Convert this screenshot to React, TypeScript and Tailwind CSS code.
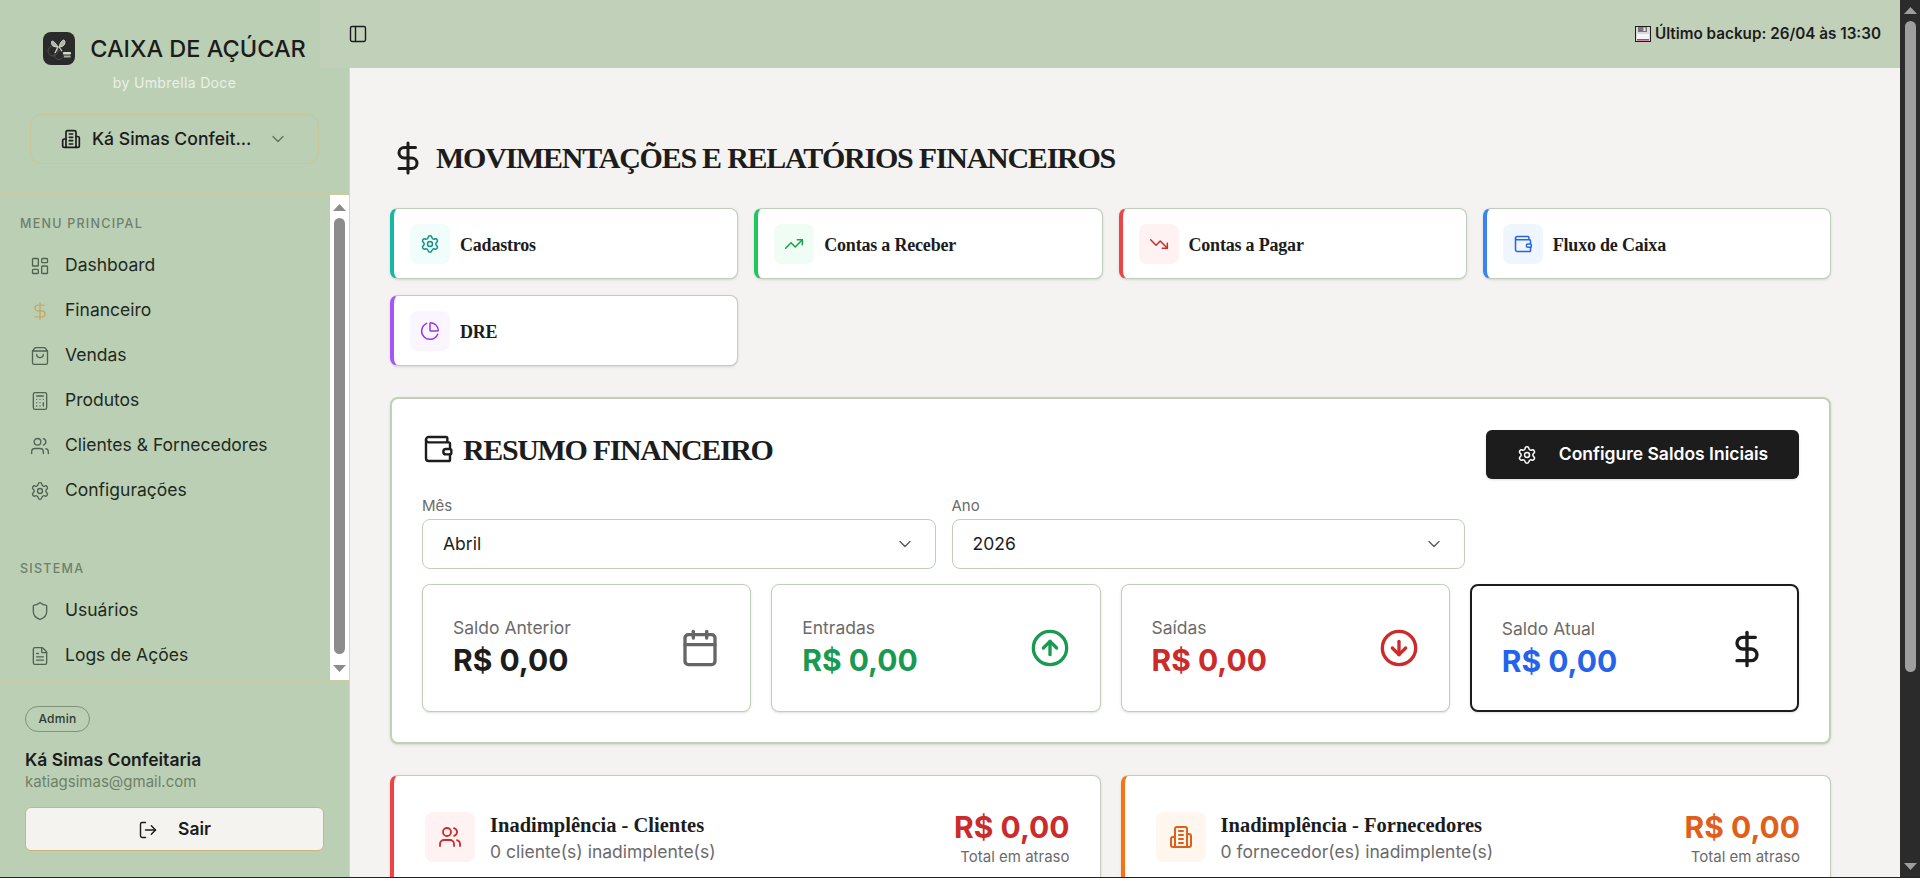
import {
    ArrowDownCircle,
    ArrowUpCircle,
    Calculator,
    Calendar,
    ChartPie,
    ChevronDown,
    DollarSign,
    FileText,
    LayoutDashboard,
    LogOut,
    PanelLeft,
    Settings,
    Shield,
    ShoppingBag,
    TrendingDown,
    TrendingUp,
    Users,
    Wallet,
} from 'lucide-react';
import type { ReactNode } from 'react';

const menuItems = [
    { label: 'Dashboard', icon: LayoutDashboard, iconClass: 'text-[#4f6450]' },
    { label: 'Financeiro', icon: DollarSign, iconClass: 'text-[#c4aa66]' },
    { label: 'Vendas', icon: ShoppingBag, iconClass: 'text-[#4f6450]' },
    { label: 'Produtos', icon: Calculator, iconClass: 'text-[#4f6450]' },
    { label: 'Clientes & Fornecedores', icon: Users, iconClass: 'text-[#4f6450]' },
    { label: 'Configurações', icon: Settings, iconClass: 'text-[#4f6450]' },
];

const systemItems = [
    { label: 'Usuários', icon: Shield, iconClass: 'text-[#4f6450]' },
    { label: 'Logs de Ações', icon: FileText, iconClass: 'text-[#4f6450]' },
];

const shortcuts = [
    { label: 'Cadastros', icon: Settings, edge: 'border-l-[#14b8a6]', box: 'bg-[#f0fdfa]', tint: 'text-[#0d9488]' },
    { label: 'Contas a Receber', icon: TrendingUp, edge: 'border-l-[#22c55e]', box: 'bg-[#f0fdf4]', tint: 'text-[#16a34a]' },
    { label: 'Contas a Pagar', icon: TrendingDown, edge: 'border-l-[#ef4444]', box: 'bg-[#fef2f2]', tint: 'text-[#cc2b2b]' },
    { label: 'Fluxo de Caixa', icon: Wallet, edge: 'border-l-[#3b82f6]', box: 'bg-[#eff6ff]', tint: 'text-[#2563eb]' },
    { label: 'DRE', icon: ChartPie, edge: 'border-l-[#a855f7]', box: 'bg-[#faf5ff]', tint: 'text-[#9333ea]' },
];

const serif = "font-['Liberation_Serif',serif]";

// the lucide version here redrew this one, so keep the older strokes
function Building({ className }: { className?: string }) {
    return (
        <svg
            viewBox="0 0 24 24"
            fill="none"
            stroke="currentColor"
            strokeWidth="2"
            strokeLinecap="round"
            strokeLinejoin="round"
            className={className}
        >
            <path d="M6 22V4a2 2 0 0 1 2-2h8a2 2 0 0 1 2 2v18Z" />
            <path d="M6 12H4a2 2 0 0 0-2 2v6a2 2 0 0 0 2 2h2" />
            <path d="M18 9h2a2 2 0 0 1 2 2v9a2 2 0 0 1-2 2h-2" />
            <path d="M10 6h4" />
            <path d="M10 10h4" />
            <path d="M10 14h4" />
            <path d="M10 18h4" />
        </svg>
    );
}

function Logo() {
    return (
        <div className="flex h-[33px] w-[32px] shrink-0 items-center justify-center rounded-lg bg-[#2a2a2a]">
            <svg viewBox="0 0 32 32" className="h-[32px] w-[32px]" fill="none">
                <circle cx="10" cy="18" r="5" stroke="#4d4d4d" strokeWidth="1" />
                <circle cx="16" cy="22" r="4.5" stroke="#4d4d4d" strokeWidth="1" />
                <path d="M15 14 C13 11 11 8 9 8 C8 10 8 14 15 14 Z" fill="#aeb3a5" stroke="#d8dccf" strokeWidth="1" />
                <path d="M16 14 C17 10 19 7 21 7 C23 9 22 14 16 14 Z" fill="#aeb3a5" stroke="#d8dccf" strokeWidth="1" />
                <path d="M15 14 L12 20 M16 14 L19 18" stroke="#d8dccf" strokeWidth="1.2" />
                <rect x="20" y="19" width="8" height="2.5" rx="1" fill="#d8dccf" />
                <rect x="21" y="22.5" width="6.5" height="2" fill="#a9ae9f" />
            </svg>
        </div>
    );
}

function Floppy() {
    return (
        <svg viewBox="0 0 16 16" className="h-[16px] w-[16px] shrink-0">
            <rect x="0.5" y="0.5" width="15" height="15" fill="#d9d9dc" stroke="#1c1c1c" />
            <rect x="3" y="1" width="9" height="5" fill="#77777c" />
            <rect x="8.5" y="1.5" width="2" height="3.5" fill="#e8e8ea" />
            <rect x="2" y="8" width="12" height="5" fill="#f6f6f6" />
            <rect x="2" y="13" width="12" height="1.5" fill="#d6336c" />
        </svg>
    );
}

function Arrow({ up, className }: { up?: boolean; className?: string }) {
    return (
        <svg viewBox="0 0 13 7" className={`h-[7px] w-[13px] ${className ?? ''}`}>
            <polygon points={up ? '6.5,0 13,7 0,7' : '0,0 13,0 6.5,7'} fill="currentColor" />
        </svg>
    );
}

function NavRow({ label, icon: Icon, iconClass }: (typeof menuItems)[number]) {
    return (
        <div className="flex h-[45px] items-center gap-[15px] px-[10px] text-[17.5px] text-[#1f2a20]">
            <Icon size={20} strokeWidth={1.6} className={iconClass} />
            <span>{label}</span>
        </div>
    );
}

function SectionLabel({ children }: { children: ReactNode }) {
    return (
        <div className="mb-[11px] h-4 text-[12.5px] leading-4 font-medium tracking-widest text-[#6e8069] uppercase">
            {children}
        </div>
    );
}

function Sidebar() {
    return (
        <aside className="flex w-[350px] shrink-0 flex-col border-r border-[#d9d6b8] bg-[#bbcfb5]">
            <div className="h-[195px] border-b border-[#cfcba0] px-[30px] pt-[32px]">
                <div className="flex items-center justify-center gap-[15px]">
                    <Logo />
                    <span className="text-[23.5px] leading-8 font-medium whitespace-nowrap text-[#1c1c1c]">
                        CAIXA DE AÇÚCAR
                    </span>
                </div>
                <p className="mt-[8px] text-center text-[14px] leading-5 tracking-wide text-[#edf0e6]">
                    by Umbrella Doce
                </p>
                <div className="mt-[21px] flex h-[50px] items-center justify-center gap-[11px] rounded-xl border border-[#c9c794] text-[#1c1c1c]">
                    <Building className="h-[20px] w-[20px]" />
                    <span className="w-[162px] text-[17.6px] font-medium whitespace-nowrap">Ká Simas Confeit...</span>
                    <ChevronDown size={20} strokeWidth={1.5} className="ml-[3px] text-[#5f6f5c]" />
                </div>
            </div>

            <div className="flex h-[485px] overflow-hidden">
                <nav className="flex-1 px-5 pt-[21px]">
                    <SectionLabel>Menu Principal</SectionLabel>
                    {menuItems.map((item) => (
                        <NavRow key={item.label} {...item} />
                    ))}
                    <div className="h-[48px]" />
                    <SectionLabel>Sistema</SectionLabel>
                    {systemItems.map((item) => (
                        <NavRow key={item.label} {...item} />
                    ))}
                </nav>
                <div className="flex w-[19px] flex-col items-center bg-white pt-[9px] pb-[8px] text-[#8c8c8c]">
                    <Arrow up />
                    <div className="mt-[7px] w-[11px] flex-1 rounded-full bg-[#8c8c8c]" />
                    <Arrow className="mt-[11px]" />
                </div>
            </div>

            <div className="flex-1 border-t border-[#cfcba0] px-[25px] pt-[25px]">
                <span className="block h-[26px] w-[65px] rounded-full border border-[#7f917a] text-center text-[12px] leading-[24px] font-medium tracking-wide text-[#2c3a2d]">
                    Admin
                </span>
                <p className="mt-4 text-[17.5px] leading-6 font-semibold text-[#1c1c1c]">Ká Simas Confeitaria</p>
                <p className="text-[15px] leading-5 text-[#6f8069]">katiagsimas@gmail.com</p>
                <button className="mt-[15px] flex h-[44px] w-[299px] items-center justify-center gap-[20px] rounded-md border border-[#c9b57a] bg-[#f5f3f0] pt-[1px] text-[17.5px] font-semibold text-[#1c1c1c]">
                    <LogOut size={20} strokeWidth={1.7} />
                    Sair
                </button>
            </div>
        </aside>
    );
}

function Shortcut({ label, icon: Icon, edge, box, tint }: (typeof shortcuts)[number]) {
    return (
        <div className={`flex h-[71px] items-center gap-[10px] rounded-lg border border-l-4 border-[#bfcfb9] bg-white pl-4 shadow-sm ${edge}`}>
            <div className={`flex h-10 w-10 items-center justify-center rounded-lg ${box}`}>
                <Icon size={20} strokeWidth={1.8} className={tint} />
            </div>
            <span className={`${serif} mt-[3px] text-[18px] font-bold tracking-[-0.2px] text-[#1c1c1c]`}>{label}</span>
        </div>
    );
}

function SelectField({ label, value }: { label: string; value: string }) {
    return (
        <div>
            <div className="mb-[3px] text-[15px] leading-5 text-[#6b6b6b]">{label}</div>
            <div className="flex h-[50px] items-center justify-between rounded-lg border border-[#bfcfb9] bg-white pr-[20px] pl-[20px] text-[17.5px] text-[#1c1c1c]">
                {value}
                <ChevronDown size={20} strokeWidth={1.5} className="text-[#555]" />
            </div>
        </div>
    );
}

function StatCard({
    label,
    valueClass,
    icon,
    strong,
}: {
    label: string;
    valueClass: string;
    icon: ReactNode;
    strong?: boolean;
}) {
    return (
        <div
            className={`flex h-[128px] items-center justify-between rounded-lg bg-white pr-[30px] pl-[30px] shadow-sm ${
                strong ? 'border-2 border-[#1c1c1c] pt-[2px]' : 'border border-[#bfcfb9]'
            }`}
        >
            <div>
                <div className="text-[17.5px] leading-6 text-[#6b6b6b]">{label}</div>
                <div className={`text-[30px] leading-10 font-bold ${valueClass}`}>R$ 0,00</div>
            </div>
            {icon}
        </div>
    );
}

function DebtCard({
    title,
    subtitle,
    icon,
    edge,
    box,
    valueClass,
}: {
    title: string;
    subtitle: string;
    icon: ReactNode;
    edge: string;
    box: string;
    valueClass: string;
}) {
    return (
        <div className={`flex items-center justify-between rounded-lg border border-l-4 border-[#bfcfb9] bg-white py-[31px] pr-[30px] pl-[31px] shadow-sm ${edge}`}>
            <div className="flex items-center gap-[15px]">
                <div className={`flex h-[50px] w-[50px] items-center justify-center rounded-lg ${box}`}>{icon}</div>
                <div>
                    <div className={`${serif} text-[20.5px] leading-7 font-bold text-[#1c1c1c]`}>{title}</div>
                    <div className="mt-[1px] text-[17.5px] leading-6 text-[#6b6b6b]">{subtitle}</div>
                </div>
            </div>
            <div className="text-right">
                <div className={`text-[30px] leading-10 font-bold ${valueClass}`}>R$ 0,00</div>
                <div className="text-[15px] leading-5 text-[#6b6b6b]">Total em atraso</div>
            </div>
        </div>
    );
}

export default function App() {
    return (
        <div className="flex h-[878px] overflow-hidden border-b border-[#222] font-['Inter',sans-serif]">
            <Sidebar />

            <div className="flex min-w-0 flex-1 flex-col">
                <header className="relative z-10 -ml-[30px] flex h-[68px] shrink-0 items-center justify-between bg-[#c1d0b9] pr-[19px] pl-[28px]">
                    <PanelLeft size={20} strokeWidth={1.7} className="text-[#1c1c1c]" />
                    <div className="flex items-center gap-[4px] text-[15.25px] font-semibold text-[#1c1c1c]">
                        <Floppy />
                        Último backup: 26/04 às 13:30
                    </div>
                </header>

                <main className="flex-1 overflow-hidden bg-[#f4f3f1] pt-[72px] pl-10">
                    <div className="w-[1441px]">
                        <h1 className="flex items-center gap-[10px] text-[#1c1c1c]">
                            <DollarSign size={36} strokeWidth={2} />
                            <span className={`${serif} text-[30px] leading-9 font-bold tracking-[-1.25px] whitespace-nowrap`}>
                                MOVIMENTAÇÕES E RELATÓRIOS FINANCEIROS
                            </span>
                        </h1>

                        <div className="mt-8 grid grid-cols-4 gap-x-4 gap-y-4">
                            {shortcuts.map((item) => (
                                <Shortcut key={item.label} {...item} />
                            ))}
                        </div>

                        <section className="mt-[31px] rounded-lg border-2 border-[#c0d0b9] bg-white p-[30px] shadow-sm">
                            <div className="flex h-[50px] items-end justify-between">
                                <h2 className="mb-[10px] flex h-[40px] items-center gap-[9px] text-[#1c1c1c]">
                                    <Wallet size={32} strokeWidth={1.8} />
                                    <span className={`${serif} text-[30px] font-bold tracking-[-1.35px]`}>RESUMO FINANCEIRO</span>
                                </h2>
                                <button className="flex h-[49px] w-[313px] items-center justify-center gap-[22px] rounded-md bg-[#1c1c1c] text-[17.5px] font-semibold text-white shadow-sm">
                                    <Settings size={20} strokeWidth={1.8} />
                                    Configure Saldos Iniciais
                                </button>
                            </div>

                            <div className="mt-[17px] grid w-[1043px] grid-cols-2 gap-4">
                                <SelectField label="Mês" value="Abril" />
                                <SelectField label="Ano" value="2026" />
                            </div>

                            <div className="mt-[15px] grid grid-cols-4 gap-5">
                                <StatCard
                                    label="Saldo Anterior"
                                    valueClass="text-[#1c1c1c]"
                                    icon={<Calendar size={40} strokeWidth={2} className="text-[#666]" />}
                                />
                                <StatCard
                                    label="Entradas"
                                    valueClass="text-[#1a9a50]"
                                    icon={<ArrowUpCircle size={40} strokeWidth={2} className="text-[#1a9a50]" />}
                                />
                                <StatCard
                                    label="Saídas"
                                    valueClass="text-[#cc2b2b]"
                                    icon={<ArrowDownCircle size={40} strokeWidth={2} className="text-[#cc2b2b]" />}
                                />
                                <StatCard
                                    strong
                                    label="Saldo Atual"
                                    valueClass="text-[#2563eb]"
                                    icon={<DollarSign size={40} strokeWidth={2} className="text-[#1c1c1c]" />}
                                />
                            </div>
                        </section>

                        <div className="mt-[31px] grid grid-cols-2 gap-5">
                            <DebtCard
                                title="Inadimplência - Clientes"
                                subtitle="0 cliente(s) inadimplente(s)"
                                edge="border-l-[#ef4444]"
                                box="bg-[#fef2f2]"
                                valueClass="text-[#cc2b2b]"
                                icon={<Users size={24} strokeWidth={1.8} className="text-[#cc2b2b]" />}
                            />
                            <DebtCard
                                title="Inadimplência - Fornecedores"
                                subtitle="0 fornecedor(es) inadimplente(s)"
                                edge="border-l-[#f97316]"
                                box="bg-[#fff7ed]"
                                valueClass="text-[#e0601a]"
                                icon={<Building className="h-6 w-6 text-[#e0601a]" />}
                            />
                        </div>
                    </div>
                </main>
            </div>

            <div className="flex w-5 shrink-0 flex-col items-center bg-[#2b2b2b] pt-[7px] text-[#9e9e9e]">
                <Arrow up />
                <div className="mt-[7px] h-[651px] w-[11px] rounded-full bg-[#9e9e9e]" />
                <Arrow className="mt-[191px]" />
            </div>
        </div>
    );
}
